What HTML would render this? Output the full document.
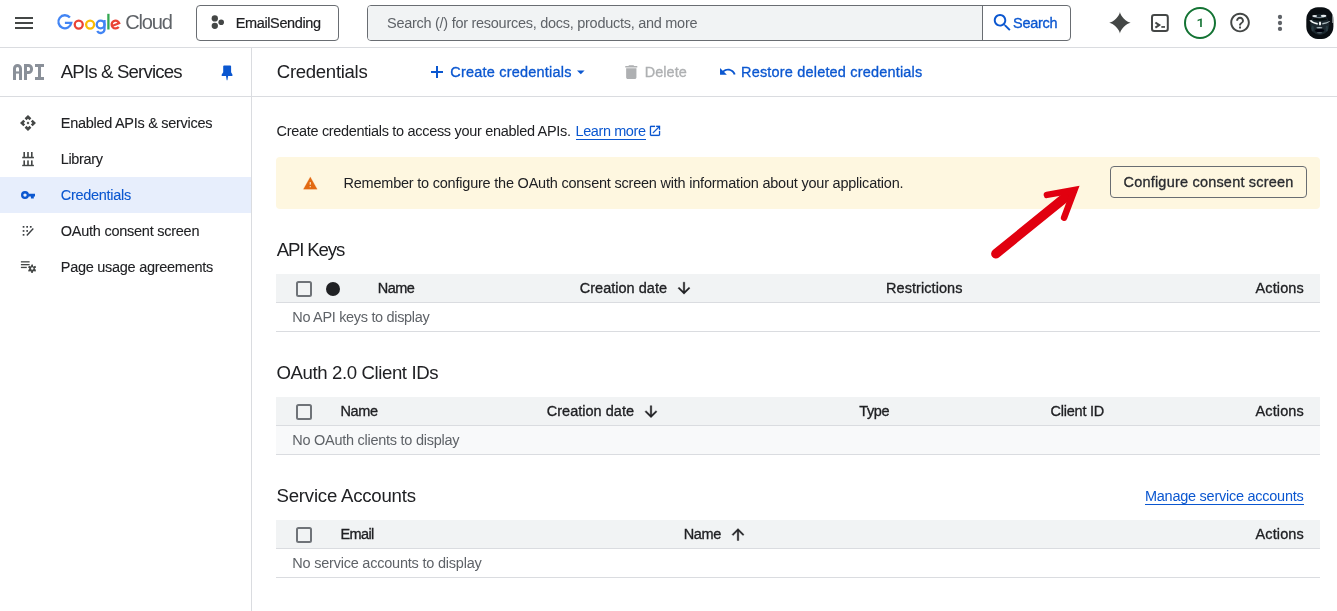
<!DOCTYPE html>
<html><head><meta charset="utf-8"><title>Credentials</title>
<style>
html,body{margin:0;padding:0;background:#fff;}
body{width:1337px;height:611px;overflow:hidden;position:relative;font-family:'Liberation Sans',sans-serif;}
.t{position:absolute;white-space:pre;font-family:'Liberation Sans',sans-serif;font-weight:400;}
svg{position:absolute;overflow:visible;}
</style></head><body>
<div style="position:absolute;left:0px;top:47px;width:1337px;height:1px;background:#dadce0;"></div>
<div style="position:absolute;left:0px;top:96px;width:1337px;height:1px;background:#dadce0;"></div>
<div style="position:absolute;left:251px;top:48px;width:1px;height:563px;background:#dadce0;"></div>
<div style="position:absolute;left:0px;top:177px;width:251px;height:36px;background:#e7eefc;"></div>
<div style="position:absolute;left:196px;top:5px;width:143px;height:36px;background:#fff;box-sizing:border-box;border:1px solid #696d72;border-radius:4px;"></div>
<div style="position:absolute;left:367px;top:5px;width:704px;height:36px;background:#fff;box-sizing:border-box;border:1px solid #696d72;border-radius:4px;overflow:hidden;"></div>
<div style="position:absolute;left:368px;top:6px;width:615px;height:34px;background:#f1f3f4;border-radius:3px 0 0 3px;"></div>
<div style="position:absolute;left:982px;top:6px;width:1px;height:34px;background:#696d72;"></div>
<div style="position:absolute;left:276px;top:157px;width:1044px;height:52px;background:#fef7e0;border-radius:4px;"></div>
<div style="position:absolute;left:1110px;top:166px;width:197px;height:32px;background:transparent;box-sizing:border-box;border:1px solid #696d72;border-radius:4px;"></div>
<div style="position:absolute;left:276px;top:274px;width:1044px;height:28px;background:#f1f3f4;"></div>
<div style="position:absolute;left:276px;top:302px;width:1044px;height:1px;background:#dadce0;"></div>
<div style="position:absolute;left:276px;top:303px;width:1044px;height:28px;background:#fff;"></div>
<div style="position:absolute;left:276px;top:331px;width:1044px;height:1px;background:#dadce0;"></div>
<div style="position:absolute;left:276px;top:397px;width:1044px;height:28px;background:#f1f3f4;"></div>
<div style="position:absolute;left:276px;top:425px;width:1044px;height:1px;background:#dadce0;"></div>
<div style="position:absolute;left:276px;top:426px;width:1044px;height:28px;background:#f8f9fa;"></div>
<div style="position:absolute;left:276px;top:454px;width:1044px;height:1px;background:#dadce0;"></div>
<div style="position:absolute;left:276px;top:520px;width:1044px;height:28px;background:#f1f3f4;"></div>
<div style="position:absolute;left:276px;top:548px;width:1044px;height:1px;background:#dadce0;"></div>
<div style="position:absolute;left:276px;top:549px;width:1044px;height:28px;background:#fff;"></div>
<div style="position:absolute;left:276px;top:577px;width:1044px;height:1px;background:#dadce0;"></div>
<div style="position:absolute;left:296px;top:281px;width:16px;height:16px;background:transparent;box-sizing:border-box;border:2px solid #6f7378;border-radius:2.5px;"></div>
<div style="position:absolute;left:296px;top:404px;width:16px;height:16px;background:transparent;box-sizing:border-box;border:2px solid #6f7378;border-radius:2.5px;"></div>
<div style="position:absolute;left:296px;top:527px;width:16px;height:16px;background:transparent;box-sizing:border-box;border:2px solid #6f7378;border-radius:2.5px;"></div>
<div style="position:absolute;left:326px;top:282px;width:14px;height:14px;background:#202124;border-radius:50%;"></div>
<div style="position:absolute;left:575.5px;top:139px;width:70.5px;height:1px;background:#0b57d0;"></div>
<div style="position:absolute;left:1145px;top:504px;width:158.75px;height:1px;background:#0b57d0;"></div>
<div style="position:absolute;left:0;top:0;width:1337px;height:611px;will-change:transform">
<svg width="1337" height="611" viewBox="0 0 1337 611" style="left:0;top:0">
<!-- hamburger -->
<g fill="#444746"><rect x="15" y="17" width="18" height="2"/><rect x="15" y="22" width="18" height="2"/><rect x="15" y="27" width="18" height="2"/></g>
<!-- Google logo -->
<g fill="none" stroke-width="2.3">
 <path d="M69.9 17.6 A6.5 6.5 0 1 0 71.3 22.9 H64.9" stroke="#4285f4"/>
 <circle cx="78.75" cy="24.55" r="4" stroke="#ea4335"/>
 <circle cx="90.1" cy="24.55" r="4" stroke="#fbbc04"/>
 <circle cx="100.6" cy="24.55" r="3.9" stroke="#4285f4"/>
 <path d="M104.5 19.9 V29.2 A3.9 3.9 0 0 1 97.2 31.0" stroke="#4285f4"/>
 <path d="M108.4 13.8 V29.5" stroke="#34a853"/>
 <path d="M118.7 26.8 A3.9 3.9 0 1 1 119.2 23.2 L112 26" stroke="#ea4335"/>
</g>
<!-- project icon -->
<g fill="#444746"><circle cx="214.800" cy="18.400" r="3.150"/><circle cx="214.800" cy="25.800" r="3.150"/><circle cx="221.200" cy="22.200" r="2.800"/></g>
<!-- API icon -->
<g fill="none" stroke="#8a9099" stroke-width="3">
 <path d="M14.500 80 V68.500 a3 3 0 0 1 3 -3 h0 a3 3 0 0 1 3 3 V80"/>
 <path d="M25.500 80 V65.500 h3 a3 3 0 0 1 3 3 v1 a3 3 0 0 1 -3 3 H25.500"/>
 <path d="M35 65.500 H44 M35 78.500 H44 M39.500 65.500 V78.500"/>
</g>
<path d="M14.500 72.500 H20.500" stroke="#8a9099" stroke-width="2.200" fill="none"/>
<!-- pin -->
<path fill="#0b57d0" d="M223.200 66.300 q0 -0.900 0.900 -0.900 h6.100 q0.900 0 0.900 0.900 V72.200 L232.400 74.500 V76 H228.100 L227.400 80.300 h-0.700 L226 76 H221.700 V74.500 L223.200 72.200 Z"/>
<!-- nav: enabled apis -->
<path transform="translate(19.27,114.27) scale(0.727)" fill="#444746" d="M14 12l-2 2-2-2 2-2 2 2zm-2-6l2.12 2.12 2.5-2.5L12 1 7.38 5.62l2.5 2.5L12 6zm-6 6l2.12-2.12-2.5-2.5L1 12l4.62 4.62 2.5-2.5L6 12zm12 0l-2.12 2.12 2.5 2.5L23 12l-4.62-4.62-2.5 2.5L18 12zm-6 6l-2.12-2.12-2.5 2.5L12 23l4.62-4.62-2.5-2.5L12 18z"/>
<!-- nav: library -->
<g fill="#444746">
 <rect x="23.400" y="152" width="1.600" height="5"/><rect x="27.200" y="152" width="1.600" height="5"/><rect x="31" y="152" width="1.600" height="5"/>
 <rect x="22.200" y="156.800" width="11.700" height="1.500"/>
 <rect x="23.400" y="160.400" width="1.600" height="4.600"/><rect x="27.200" y="160.400" width="1.600" height="4.600"/><rect x="31" y="160.400" width="1.600" height="4.600"/>
 <rect x="22.200" y="164.800" width="11.700" height="1.400"/>
</g>
<!-- nav: key -->
<circle cx="25" cy="195.100" r="2.850" fill="none" stroke="#0b57d0" stroke-width="2.300"/>
<path d="M28.400 193.800 H35 V196.400 H33.800 V198.400 H30.900 V196.400 H28.400 Z" fill="#0b57d0"/>
<!-- nav: oauth consent -->
<g fill="#3c4043">
 <rect x="22.700" y="226" width="1.700" height="1.700"/><rect x="26.300" y="226" width="1.700" height="1.700"/><rect x="29.900" y="226" width="1.700" height="1.700"/>
 <rect x="22.700" y="230.100" width="1.700" height="1.700"/><rect x="26.300" y="230.100" width="1.700" height="1.700"/>
 <rect x="22.700" y="234" width="1.700" height="1.700"/>
</g>
<path d="M26.800 235.400 L33.300 228.500" fill="none" stroke="#3c4043" stroke-width="1.400"/>
<!-- nav: page usage -->
<g fill="#444746">
 <rect x="20.900" y="261.200" width="8.700" height="1.300"/><rect x="20.900" y="264" width="8.700" height="1.300"/><rect x="20.900" y="266.800" width="5.900" height="1.300"/>
 <circle cx="32" cy="269" r="2.800"/>
</g>
<g stroke="#444746" stroke-width="1.400"><path d="M32 264.900 V273.100 M28.450 266.950 L35.550 271.050 M28.450 271.050 L35.550 266.950"/></g>
<circle cx="32" cy="269" r="1.300" fill="#fff"/>
</g>
<g stroke="#444746" stroke-width="1.5"><path d="M32.2 264.6 V272.4 M28.8 266.5 L35.6 270.5 M28.8 270.5 L35.6 266.5"/></g>
<circle cx="32.2" cy="268.5" r="1.2" fill="#fff"/>
<!-- create credentials: plus + caret -->
<path d="M437 66 V78 M431 72 H443" stroke="#0b57d0" stroke-width="2" fill="none"/>
<path d="M577 70.5 H584.6 L580.8 74.3 Z" fill="#0b57d0"/>
<!-- trash -->
<path transform="translate(621,62.9) scale(0.857,0.767)" fill="#aeb0b2" d="M6 19c0 1.100.9 2 2 2h8c1.1 0 2-.9 2-2V7H6v12zM19 4h-3.500l-1-1h-5l-1 1H5v2h14V4z"/>
<!-- restore (undo) -->
<path transform="translate(718.5,62.6) scale(0.76)" fill="#0b57d0" d="M12.5 8c-2.650 0-5.050.99-6.900 2.600L2 7v9h9l-3.620-3.620c1.390-1.160 3.160-1.880 5.120-1.880 3.540 0 6.550 2.310 7.600 5.500l2.370-.78C21.080 11.030 17.150 8 12.500 8z"/>
<!-- search icon -->
<path transform="translate(990.9,11.2) scale(0.96)" fill="#0b57d0" d="M15.500 14h-.790l-.280-.270C15.410 12.590 16 11.110 16 9.500 16 5.910 13.090 3 9.500 3S3 5.910 3 9.500 5.910 16 9.500 16c1.610 0 3.090-.590 4.230-1.570l.270.280v.790l5 4.990L20.490 19l-4.990-5zm-6 0C7.010 14 5 11.990 5 9.500S7.010 5 9.500 5 14 7.010 14 9.500 11.990 14 9.500 14z"/>
<!-- sparkle -->
<path transform="translate(1119.950,22.800)" fill="#444746" d="M0,-10.700 C0.300,-6.800 6.800,-0.300 10.700,0 C6.800,0.300 0.300,6.800 0,10.700 C-0.300,6.800 -6.800,0.300 -10.700,0 C-6.800,-0.300 -0.300,-6.800 0,-10.700Z"/>
<!-- terminal -->
<rect x="1152" y="15.100" width="15.800" height="15.800" rx="2.200" fill="none" stroke="#444746" stroke-width="2"/>
<path d="M1155.400 22.500 L1159.200 25.050 L1155.400 27.600" fill="none" stroke="#444746" stroke-width="2.100"/>
<rect x="1161.300" y="26.100" width="3.700" height="1.700" fill="#444746"/>
<!-- notifications -->
<circle cx="1200" cy="23" r="15" fill="none" stroke="#137333" stroke-width="2"/>
<path d="M1201.800 18.400 V26.900 H1200.150 V20.350 L1197.600 21.250 V19.750 L1201.500 18.400 Z" fill="#137333"/>
<!-- help -->
<path transform="translate(1228.300,10.850) scale(0.978)" fill="#444746" d="M11 18h2v-2h-2v2zm1-16C6.480 2 2 6.480 2 12s4.480 10 10 10 10-4.480 10-10S17.520 2 12 2zm0 18c-4.410 0-8-3.590-8-8s3.590-8 8-8 8 3.590 8 8-3.590 8-8 8zm0-14c-2.210 0-4 1.790-4 4h2c0-1.100.9-2 2-2s2 .9 2 2c0 2-3 1.750-3 5h2c0-2.250 3-2.500 3-5 0-2.210-1.790-4-4-4z"/>
<!-- more vert -->
<g fill="#5f6368"><circle cx="1280" cy="17" r="2.150"/><circle cx="1280" cy="23" r="2.150"/><circle cx="1280" cy="28.950" r="2.150"/></g>
<!-- avatar -->
<defs><filter id="bl" x="-50%" y="-50%" width="200%" height="200%"><feGaussianBlur stdDeviation="0.600"/></filter>
<clipPath id="av"><rect x="1306.300" y="7.200" width="27.100" height="31.800" rx="11.500" ry="12.500"/></clipPath></defs>
<rect x="1306.300" y="7.200" width="27.100" height="31.800" rx="11.500" ry="12.500" fill="#0a0f13"/>
<g clip-path="url(#av)" filter="url(#bl)">
 <ellipse cx="1319.800" cy="24.500" rx="9.500" ry="10.500" fill="#1a272e"/>
 <ellipse cx="1319.800" cy="19.300" rx="7.500" ry="1.500" fill="#06090c"/>
 <ellipse cx="1314.700" cy="16.100" rx="2.500" ry="1.050" fill="#dfe6e9"/>
 <ellipse cx="1323.600" cy="16" rx="2.900" ry="1.150" fill="#e6ecee"/>
 <ellipse cx="1319.300" cy="17.600" rx="4.500" ry="0.600" fill="#7d8c94"/>
 <path d="M1309.400 20.300 Q1310.500 22.800 1317.600 24.800 L1317.800 23 Q1313 22.200 1311.800 20.200Z" fill="#f3f6f7"/>
 <path d="M1330 21.600 Q1327 24 1322.300 24.500 L1322.300 23 Q1327 22.600 1329.600 21Z" fill="#aebabf"/>
 <ellipse cx="1320" cy="23.500" rx="1.100" ry="2" fill="#f4f7f8"/>
 <ellipse cx="1319.400" cy="27.700" rx="3.100" ry="0.700" fill="#b4bec3"/>
 <ellipse cx="1319.600" cy="30.500" rx="4.600" ry="1.700" fill="#030608"/>
 <ellipse cx="1319.600" cy="32.700" rx="2.700" ry="0.700" fill="#56666e"/>
 <ellipse cx="1312.600" cy="28.500" rx="1.200" ry="3" fill="#2b3b43"/>
 <ellipse cx="1326.800" cy="28.500" rx="1.200" ry="3" fill="#2b3b43"/>
 <rect x="1332.400" y="13" width="1.200" height="10" fill="#c9d0d3"/>
</g>
<!-- external link -->
<path transform="translate(648.200,124.100) scale(0.567)" fill="#0b57d0" stroke="#0b57d0" stroke-width="0.3" d="M19 19H5V5h7V3H5c-1.110 0-2 .9-2 2v14c0 1.100.890 2 2 2h14c1.100 0 2-.9 2-2v-7h-2v7zM14 3v2h3.590l-9.830 9.830 1.410 1.410L19 6.410V10h2V3h-7z"/>
<!-- warning -->
<path transform="translate(302.800,175.600) scale(0.625,0.645)" fill="#e26a12" stroke="#e26a12" stroke-width="0.35" stroke-linejoin="round" d="M1 21h22L12 2 1 21zm12-3h-2v-2h2v2zm0-4h-2v-4h2v4z"/>
<!-- sort arrows -->
<path transform="translate(675,279.200) scale(0.75)" fill="#202124" stroke="#202124" stroke-width="0.5" d="M20 12l-1.410-1.410L13 16.170V4h-2v12.170l-5.580-5.590L4 12l8 8 8-8z"/>
<path transform="translate(642,402.700) scale(0.75)" fill="#202124" stroke="#202124" stroke-width="0.5" d="M20 12l-1.410-1.410L13 16.170V4h-2v12.170l-5.580-5.590L4 12l8 8 8-8z"/>
<path transform="translate(729,525.500) scale(0.75)" fill="#202124" stroke="#202124" stroke-width="0.5" d="M4 12l1.410 1.410L11 7.830V20h2V7.830l5.580 5.590L20 12l-8-8-8 8z"/>
<!-- red annotation arrow -->
<g fill="none" stroke="#e1000f" stroke-linecap="round">
 <path d="M995.900 253.800 L1068 195.300" stroke-width="9.500"/>
 <path d="M1068 195.300 L1071 192.850" stroke-width="9.500" stroke-linecap="butt"/>
 <path d="M1046.900 194.900 L1074.500 190 L1064.100 217.700" stroke-width="6.500" stroke-linejoin="miter" stroke-miterlimit="10"/>
</g>
</svg>

<span class="t" style="left:125.20px;top:11px;font-size:20.08px;line-height:22px;letter-spacing:-1.167px;color:#5f6368;">Cloud</span>
<span class="t" style="left:235.70px;top:15px;font-size:14.49px;line-height:16px;letter-spacing:-0.361px;color:#202124;-webkit-text-stroke:0.2px #202124;">EmailSending</span>
<span class="t" style="left:387.00px;top:15px;font-size:14.49px;line-height:16px;letter-spacing:-0.268px;color:#5f6368;">Search (/) for resources, docs, products, and more</span>
<span class="t" style="left:1013.00px;top:15px;font-size:14.49px;line-height:16px;letter-spacing:-0.281px;color:#0b57d0;-webkit-text-stroke:0.32px #0b57d0;">Search</span>
<span class="t" style="left:60.75px;top:61px;font-size:18.63px;line-height:21px;letter-spacing:-0.834px;color:#202124;">APIs &amp; Services</span>
<span class="t" style="left:276.75px;top:61px;font-size:18.63px;line-height:21px;letter-spacing:-0.314px;color:#202124;">Credentials</span>
<span class="t" style="left:450.25px;top:64px;font-size:14.49px;line-height:16px;letter-spacing:0.218px;color:#0b57d0;-webkit-text-stroke:0.32px #0b57d0;">Create credentials</span>
<span class="t" style="left:644.75px;top:64px;font-size:14.49px;line-height:16px;letter-spacing:0.025px;color:#aeb0b2;-webkit-text-stroke:0.32px #aeb0b2;">Delete</span>
<span class="t" style="left:741.00px;top:64px;font-size:14.49px;line-height:16px;letter-spacing:0.189px;color:#0b57d0;-webkit-text-stroke:0.32px #0b57d0;">Restore deleted credentials</span>
<span class="t" style="left:60.75px;top:115px;font-size:14.49px;line-height:16px;letter-spacing:-0.276px;color:#202124;-webkit-text-stroke:0.1px #202124;">Enabled APIs &amp; services</span>
<span class="t" style="left:60.75px;top:151px;font-size:14.49px;line-height:16px;letter-spacing:-0.339px;color:#202124;-webkit-text-stroke:0.1px #202124;">Library</span>
<span class="t" style="left:60.75px;top:187px;font-size:14.49px;line-height:16px;letter-spacing:-0.277px;color:#0b57d0;-webkit-text-stroke:0.1px #0b57d0;">Credentials</span>
<span class="t" style="left:60.75px;top:223px;font-size:14.49px;line-height:16px;letter-spacing:-0.241px;color:#202124;-webkit-text-stroke:0.1px #202124;">OAuth consent screen</span>
<span class="t" style="left:60.75px;top:259px;font-size:14.49px;line-height:16px;letter-spacing:-0.267px;color:#202124;-webkit-text-stroke:0.1px #202124;">Page usage agreements</span>
<span class="t" style="left:276.50px;top:123px;font-size:14.49px;line-height:16px;letter-spacing:-0.302px;color:#202124;">Create credentials to access your enabled APIs.</span>
<span class="t" style="left:575.50px;top:123px;font-size:14.49px;line-height:16px;letter-spacing:-0.398px;color:#0b57d0;">Learn more</span>
<span class="t" style="left:343.50px;top:175px;font-size:14.49px;line-height:16px;letter-spacing:-0.210px;color:#202124;">Remember to configure the OAuth consent screen with information about your application.</span>
<span class="t" style="left:1123.50px;top:174px;font-size:14.49px;line-height:16px;letter-spacing:0.210px;color:#2a2c30;-webkit-text-stroke:0.32px #2a2c30;">Configure consent screen</span>
<span class="t" style="left:276.75px;top:239px;font-size:18.63px;line-height:21px;letter-spacing:-1.150px;color:#202124;">API Keys</span>
<span class="t" style="left:377.75px;top:280px;font-size:14.49px;line-height:16px;letter-spacing:-0.547px;color:#202124;-webkit-text-stroke:0.32px #202124;">Name</span>
<span class="t" style="left:579.75px;top:280px;font-size:14.49px;line-height:16px;letter-spacing:0.023px;color:#202124;-webkit-text-stroke:0.32px #202124;">Creation date</span>
<span class="t" style="left:886.00px;top:280px;font-size:14.49px;line-height:16px;letter-spacing:0.075px;color:#202124;-webkit-text-stroke:0.32px #202124;">Restrictions</span>
<span class="t" style="left:1255.50px;top:280px;font-size:14.49px;line-height:16px;letter-spacing:0.125px;color:#202124;-webkit-text-stroke:0.32px #202124;">Actions</span>
<span class="t" style="left:292.25px;top:309px;font-size:14.49px;line-height:16px;letter-spacing:-0.315px;color:#5f6368;">No API keys to display</span>
<span class="t" style="left:276.50px;top:362px;font-size:18.63px;line-height:21px;letter-spacing:-0.402px;color:#202124;">OAuth 2.0 Client IDs</span>
<span class="t" style="left:340.50px;top:403px;font-size:14.49px;line-height:16px;letter-spacing:-0.380px;color:#202124;-webkit-text-stroke:0.32px #202124;">Name</span>
<span class="t" style="left:546.75px;top:403px;font-size:14.49px;line-height:16px;letter-spacing:0.023px;color:#202124;-webkit-text-stroke:0.32px #202124;">Creation date</span>
<span class="t" style="left:859.25px;top:403px;font-size:14.49px;line-height:16px;letter-spacing:-0.385px;color:#202124;-webkit-text-stroke:0.32px #202124;">Type</span>
<span class="t" style="left:1050.50px;top:403px;font-size:14.49px;line-height:16px;letter-spacing:-0.225px;color:#202124;-webkit-text-stroke:0.32px #202124;">Client ID</span>
<span class="t" style="left:1255.50px;top:403px;font-size:14.49px;line-height:16px;letter-spacing:0.125px;color:#202124;-webkit-text-stroke:0.32px #202124;">Actions</span>
<span class="t" style="left:292.25px;top:432px;font-size:14.49px;line-height:16px;letter-spacing:-0.256px;color:#5f6368;">No OAuth clients to display</span>
<span class="t" style="left:276.50px;top:485px;font-size:18.63px;line-height:21px;letter-spacing:-0.217px;color:#202124;">Service Accounts</span>
<span class="t" style="left:1145.00px;top:488px;font-size:14.49px;line-height:16px;letter-spacing:-0.250px;color:#0b57d0;">Manage service accounts</span>
<span class="t" style="left:340.50px;top:526px;font-size:14.49px;line-height:16px;letter-spacing:-0.617px;color:#202124;-webkit-text-stroke:0.32px #202124;">Email</span>
<span class="t" style="left:683.75px;top:526px;font-size:14.49px;line-height:16px;letter-spacing:-0.380px;color:#202124;-webkit-text-stroke:0.32px #202124;">Name</span>
<span class="t" style="left:1255.50px;top:526px;font-size:14.49px;line-height:16px;letter-spacing:0.125px;color:#202124;-webkit-text-stroke:0.32px #202124;">Actions</span>
<span class="t" style="left:292.25px;top:555px;font-size:14.49px;line-height:16px;letter-spacing:-0.212px;color:#5f6368;">No service accounts to display</span>
</div>
</body></html>
